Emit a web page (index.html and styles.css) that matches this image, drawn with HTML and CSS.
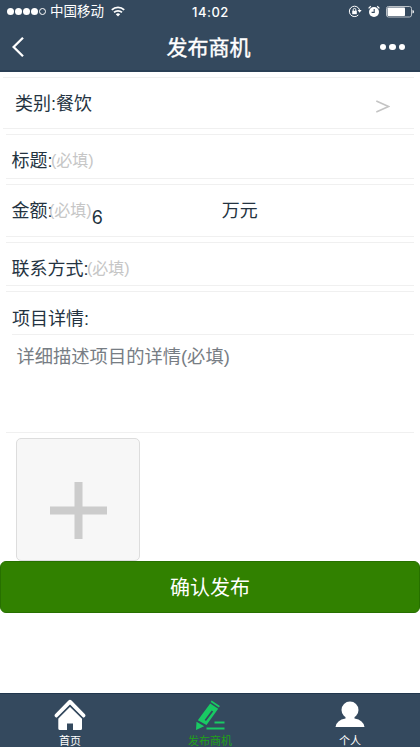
FILE: index.html
```html
<!DOCTYPE html>
<html lang="zh-CN">
<head>
<meta charset="utf-8">
<title>发布商机</title>
<link rel="stylesheet" href="styles.css">
</head>
<body>
<div class="app">
  <header class="header">
    <div class="status">
      <div class="status-left">
        <span class="signal"><i></i><i></i><i></i><i></i><i class="empty"></i></span>
        <span class="carrier">中国移动</span>
        <svg class="wifi" width="14" height="11" viewBox="0 0 14 11" fill="none" stroke="#fff" stroke-width="1.8"><path d="M.8 3.8a9 9 0 0 1 12.4 0M3 6.4a5.8 5.8 0 0 1 8 0"/><path d="M7 10.6 4.8 8.2a3.2 3.2 0 0 1 4.4 0z" fill="#fff" stroke="none"/></svg>
      </div>
      <span class="time">14:02</span>
      <div class="status-right">
        <svg width="14" height="13" viewBox="0 0 14 13" fill="none" stroke="#fff"><path d="M11.6 5.2A5.2 5.2 0 1 0 10.3 10"/><path d="M9.6 5h4l-2 2.8z" fill="#fff" stroke="none"/><path d="M4.2 5.8h4.6v3.4H4.2z" fill="#fff" stroke="none"/><path d="M5.2 6V4.7a1.3 1.3 0 0 1 2.6 0V6"/></svg>
        <svg width="12" height="13" viewBox="0 0 12 13"><circle cx="6" cy="7" r="5" fill="#fff"/><path d="M.6 3.4 2.8 1.3M11.4 3.4 9.2 1.3" stroke="#fff" stroke-width="1.2"/><path d="M6.2 4v3.4H3.6" fill="none" stroke="#34495e" stroke-width="1.1"/></svg>
        <svg width="28" height="12" viewBox="0 0 28 12"><rect x=".5" y=".5" width="25" height="10.5" rx="2" fill="none" stroke="#b9c0c6"/><rect x="1.5" y="1.5" width="17.5" height="8.5" rx=".8" fill="#fff"/><path d="M26.5 4q1.5 0 1.5 1.8t-1.5 1.8z" fill="#fff"/></svg>
      </div>
    </div>
    <nav class="nav">
      <svg width="12" height="20" viewBox="0 0 12 20" fill="none" stroke="#fff" stroke-width="2.3"><path d="M11 .8 1.600 10l9.400 9.200"/></svg>
      <h1>发布商机</h1>
      <span class="more"><i></i><i></i><i></i></span>
    </nav>
  </header>
  <main>
    <section class="row category"><span>类别:餐饮</span><svg width="14" height="13" viewBox="0 0 14 13" fill="none" stroke="#c4c4c4" stroke-width="1.5"><path d="M.3 1 12.5 6.5.3 12"/></svg></section>
    <section class="row subject"><span>标题:</span><span class="hint">(必填)</span></section>
    <section class="row amount"><span>金额:</span><span class="hint">(必填)</span><span class="value">6</span><span class="unit">万元</span></section>
    <section class="row contact"><span>联系方式:</span><span class="hint">(必填)</span></section>
    <section class="details">
      <div class="details-label">项目详情:</div>
      <div class="details-input">详细描述项目的详情(必填)</div>
    </section>
    <div class="upload"><svg width="57" height="57" viewBox="0 0 57 57" fill="#ccc"><path d="M24.5 0h8v24.5H57v8H32.5V57h-8V32.5H0v-8h24.5z"/></svg></div>
    <div class="submit">确认发布</div>
  </main>
  <footer class="tabs">
    <div class="tab"><svg width="32" height="32" viewBox="0 0 32 32" fill="#fff"><path d="M2.8 16.500 16 3l13.200 13.500" fill="none" stroke="#fff" stroke-width="4.300" stroke-linecap="round" stroke-linejoin="round"/><path d="M4.300 19.500 16 7.500l12 12V29.500q0 1.500-1.500 1.500H19v-6.500h-6V31H6q-1.700 0-1.700-1.500z"/><path d="M3 19.500 16 6.600l13 12.900" fill="none" stroke="#34495e" stroke-width="1.600"/></svg><span>首页</span></div>
    <div class="tab active"><svg width="30" height="32" viewBox="0 0 30 32" fill="#19ca63"><path fill-rule="evenodd" d="m15.200 4.500 8 5.200L11.500 26 2.800 21.300zM16.700 11.500 9.600 21l1.400 1 7.200-9.500z"/><path d="m16.600 1.500 8.300 5.500-1 1.400-8.200-5.500zM1.500 22.800l7.700 4.400L1 31zM19.500 22.500h10v2h-10zM11.500 28.500h18v2h-18z"/></svg><span>发布商机</span></div>
    <div class="tab"><svg width="30" height="32" viewBox="0 0 30 32" fill="#fff"><ellipse cx="15" cy="11" rx="8.500" ry="8.500"/><path d="M10.500 17h9v2.500q9 1.500 10 8.500H.5q1-7 10-8.500z"/></svg><span>个人</span></div>
  </footer>
</div>
</body>
</html>
```
FILE: styles.css
```css
* { box-sizing: border-box; }
body {
  margin: 0;
  background: #fff;
  color: #243341;
  font-family: "Liberation Sans", "Noto Sans CJK SC", sans-serif;
  font-size: 18px;
}
svg { display: block; flex: none; }
.app { width: 420px; height: 747px; display: flex; flex-direction: column; overflow: hidden; }
.header { height: 72px; background: #34495e; border-bottom: 2px solid #20364d; border-bottom-color: #2a3f55; color: #fff; }
.status {
  height: 23px;
  display: grid;
  grid-template-columns: 1fr auto 1fr;
  align-items: center;
  padding: 0 6px 0 7px;
  font-size: 13.5px;
  line-height: 20px;
}
.status-left, .status-right { display: flex; align-items: center; }
.status-right { justify-content: flex-end; gap: 6px; }
.signal { display: flex; gap: 1px; }
.signal i { width: 7px; height: 7px; border-radius: 50%; background: #fff; }
.signal .empty { background: none; border: 1px solid #fff; }
.carrier { margin-left: 4px; }
.wifi { margin-left: 7px; }
.time { font-family: Inter, sans-serif; font-weight: 500; font-size: 13px; letter-spacing: .5px; }
.nav {
  height: 48px;
  display: grid;
  grid-template-columns: 1fr auto 1fr;
  align-items: center;
  padding: 0 15px 0 12px;
}
.nav h1 { margin: 0; padding-top: 1px; font-size: 21px; line-height: 30px; font-weight: 400; -webkit-text-stroke: .4px #fff; }
.more { display: flex; gap: 3px; justify-content: flex-end; }
.more i { width: 6.500px; height: 6.500px; border-radius: 50%; background: #fff; }
main { flex: 1; display: flex; flex-direction: column; }
.row {
  display: flex;
  align-items: center;
  margin: 5px 6px 0;
  padding-left: 5.500px;
  border: solid #f0f0f0;
  border-width: 1px 0;
  line-height: 26px;
}
.category { height: 52px; margin-left: 3px; padding: 2px 24px 0 12px; justify-content: space-between; }
.category svg { margin-top: 5px; }
.subject { height: 45px; padding-top: 8px; }
.amount { height: 53px; padding-top: 1px; }
.contact { height: 44px; padding-top: 9px; }
.hint { color: #c6c6c6; font-size: 16px; margin-left: -1.500px; }
.amount .hint { margin-left: -3.500px; }
.value { font-family: Inter, sans-serif; font-size: 18px; margin-top: 14px; }
.unit { margin-left: 119px; }
.details { height: 142px; margin: 5px 6px 0; border: solid #f0f0f0; border-width: 1px 0; }
.details-label { height: 43px; margin-left: 6px; padding-top: 14px; line-height: 26px; border-bottom: 1px solid #f0f0f0; }
.details-input { margin: 8px 0 0 10.500px; line-height: 28px; color: #777d84; font-size: 18.300px; }
.upload {
  width: 124px;
  height: 123px;
  margin: 5px 0 0 16px;
  padding: 43px 0 0 33px;
  border: 1px solid #ddd;
  border-radius: 5px;
  background: #f7f7f7;
}
.submit {
  height: 52px;
  background: #318100;
  border: 1px solid #277000;
  border-radius: 6px;
  color: #fff;
  text-align: center;
  font-size: 20px;
  line-height: 52px;
}
.tabs {
  height: 54px;
  display: grid;
  grid-template-columns: repeat(3, 1fr);
  background: #34495e;
  border-top: 1px solid #20364d;
  color: #fff;
}
.tab { display: flex; flex-direction: column; align-items: center; padding-top: 5px; font-size: 11px; line-height: 16px; }
.tab span { margin-top: 2px; }
.active { color: #20a316; }
```
